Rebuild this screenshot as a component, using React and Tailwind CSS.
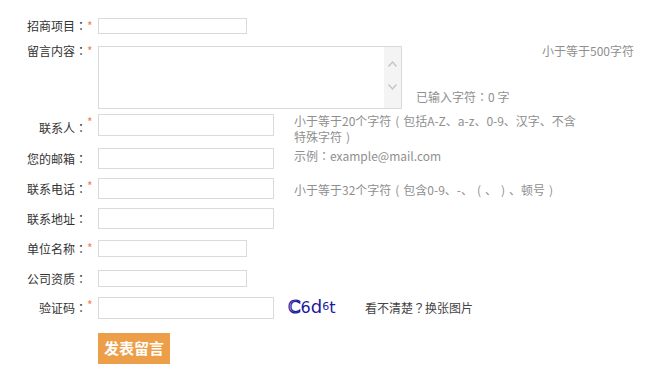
const font = { fontFamily: '"Noto Sans CJK SC", "Liberation Sans", sans-serif' };
const tc = { fontFamily: '"Noto Sans CJK TC", sans-serif' };

// full-width punctuation centred in its cell, as in the screenshot
function P({ children }) {
  return <span style={tc}>{children}</span>;
}

// centred full-width bracket
function B({ children }) {
  return <span className="inline-block w-[12px] text-center">{children}</span>;
}

function Star({ show }) {
  return (
    <span className="w-[11px] shrink-0 text-[12px] leading-4 text-[#f7814f]">
      {show ? '*' : ''}
    </span>
  );
}

function Row({ label, required, labelPt, className = '', children }) {
  return (
    <div className={`flex items-start ${className}`}>
      <div className={`w-[87px] shrink-0 text-right text-[12px] leading-4 text-[#333] ${labelPt}`}>
        {label}
        <P>：</P>
      </div>
      <Star show={required} />
      {children}
    </div>
  );
}

function Input({ w, h }) {
  return <input type="text" className={`${w} ${h} shrink-0 border border-[#dadada] bg-white px-1 text-[12px] outline-none`} />;
}

function Hint({ className = '', children }) {
  return <div className={`text-[12px] leading-4 text-[#8f8f8f] whitespace-nowrap ${className}`}>{children}</div>;
}

export default function App() {
  return (
    <div className="min-h-[382px] w-[664px] bg-white pt-[18px]" style={font}>
      {/* 招商项目 */}
      <Row label="招商项目" required labelPt="pt-0" className="h-[16px]">
        <Input w="w-[149px]" h="h-[16px]" />
      </Row>

      {/* 留言内容 */}
      <Row label="留言内容" required labelPt="pt-0" className="mt-[9px] h-[66px]">
        <div className="mt-[3px] flex h-[63px] w-[304px] shrink-0 border border-[#dadada] bg-white">
          <textarea className="h-full flex-1 resize-none bg-white p-1 text-[12px] outline-none" />
          <div className="flex w-[17px] flex-col items-center bg-[#f4f4f4]">
            <svg className="mt-[14px]" width="9" height="6" viewBox="0 0 9 6" fill="none" stroke="#c4c4c4" strokeWidth="1.3">
              <path d="M0.5 5.5 L4.5 1 L8.5 5.5" />
            </svg>
            <svg className="mt-[17px]" width="9" height="6" viewBox="0 0 9 6" fill="none" stroke="#c4c4c4" strokeWidth="1.3">
              <path d="M0.5 0.5 L4.5 5 L8.5 0.5" />
            </svg>
          </div>
        </div>
        <div className="ml-[14px] flex h-[66px] w-[222px] flex-col justify-between pb-[4px]">
          <Hint className="self-end pr-[4px]">小于等于500字符</Hint>
          <Hint>已输入字符<P>：</P>0 字</Hint>
        </div>
      </Row>

      {/* 联系人 */}
      <Row label="联系人" required labelPt="pt-[6px]" className="mt-[5px] h-[22px]">
        <Input w="w-[176px]" h="h-[22px]" />
        <Hint className="ml-[20px] -mt-[1px]">
          小于等于20个字符<B>(</B>包括A-Z、a-z、0-9、汉字、不含
          <br />
          特殊字符<B>)</B>
        </Hint>
      </Row>

      {/* 您的邮箱 */}
      <Row label="您的邮箱" labelPt="pt-[3px]" className="mt-[12px] h-[21px]">
        <Input w="w-[176px]" h="h-[21px]" />
        <Hint className="ml-[20px] pt-0">示例<P>：</P>example@mail.com</Hint>
      </Row>

      {/* 联系电话 */}
      <Row label="联系电话" required labelPt="pt-[3px]" className="mt-[9px] h-[21px]">
        <Input w="w-[176px]" h="h-[21px]" />
        <Hint className="ml-[20px] pt-[4px]">
          小于等于32个字符<B>(</B>包含0-9、-、<B>(</B>、<B>)</B>、顿号<B>)</B>
        </Hint>
      </Row>

      {/* 联系地址 */}
      <Row label="联系地址" labelPt="pt-[3px]" className="mt-[9px] h-[21px]">
        <Input w="w-[176px]" h="h-[21px]" />
      </Row>

      {/* 单位名称 */}
      <Row label="单位名称" required labelPt="pt-[1px]" className="mt-[11px] h-[17px]">
        <Input w="w-[149px]" h="h-[17px]" />
      </Row>

      {/* 公司资质 */}
      <Row label="公司资质" labelPt="pt-[1px]" className="mt-[13px] h-[17px]">
        <Input w="w-[149px]" h="h-[17px]" />
      </Row>

      {/* 验证码 */}
      <Row label="验证码" required labelPt="pt-[3px]" className="mt-[10px] h-[22px]">
        <Input w="w-[176px]" h="h-[22px]" />
        <div
          className="ml-[14px] mt-[3px] flex h-[16px] w-[50px] items-end leading-none text-[#1a1a9c]"
          style={{ fontFamily: '"DejaVu Sans", sans-serif' }}
        >
          <span className="text-[18px] text-transparent [-webkit-text-stroke:1.2px_#1a1a9c]">C</span>
          <span className="text-[16px]">6</span>
          <span className="text-[18px]">d</span>
          <span className="mb-[4px] text-[11px]">6</span>
          <span className="text-[16px]">t</span>
        </div>
        <div className="ml-[27px] pt-[3px] text-[12px] leading-4 text-[#444] whitespace-nowrap">
          看不清楚<P>？</P>换张图片
        </div>
      </Row>

      <div className="ml-[98px] mt-[14px]">
        <button className="h-[31px] w-[72px] bg-[#ed9e49] text-[15px] font-bold text-white">发表留言</button>
      </div>
    </div>
  );
}
